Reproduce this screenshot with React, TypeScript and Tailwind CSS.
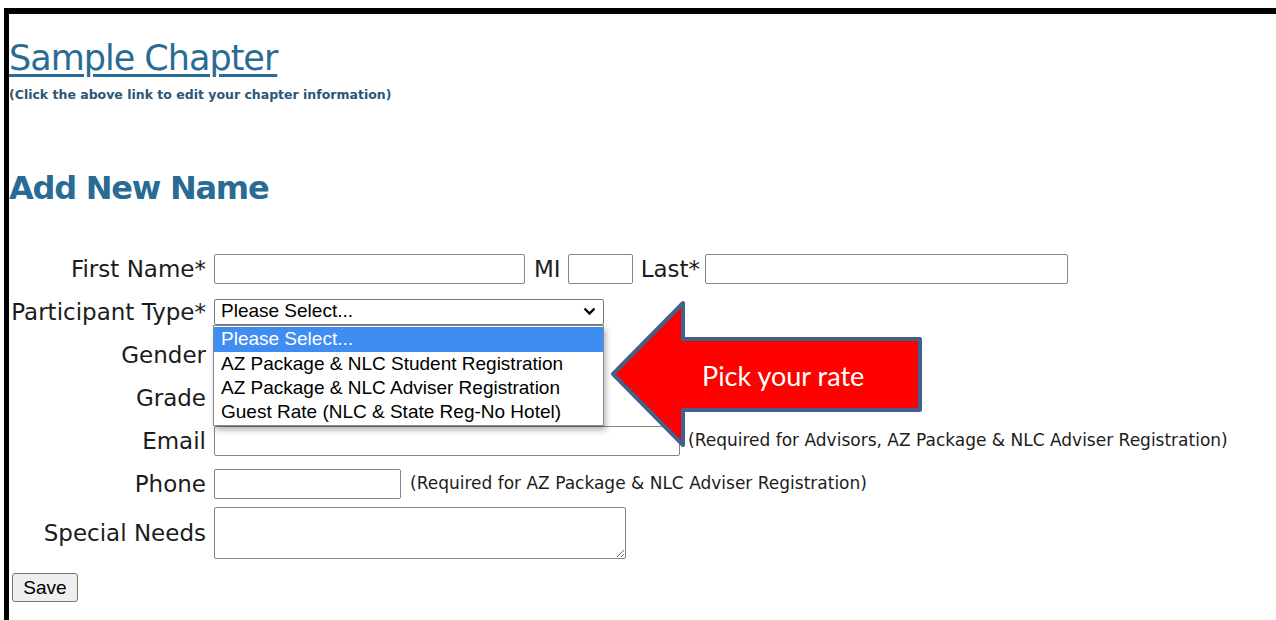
import React from "react";

const sans = "font-['DejaVu_Sans',Verdana,sans-serif]";
const arial = "font-['Liberation_Sans',Arial,sans-serif]";

function Label({ children }: { children: React.ReactNode }) {
  return (
    <div className={`w-[197px] shrink-0 text-right text-[23px] leading-[28px] text-[#1c1c1c] ${sans}`}>
      {children}
    </div>
  );
}

function Field({ w, h = 30 }: { w: number; h?: number }) {
  return (
    <input
      type="text"
      style={{ width: w, height: h }}
      className="rounded-[2px] border border-[#858585] bg-white outline-none"
    />
  );
}

const options = [
  "Please Select...",
  "AZ Package & NLC Student Registration",
  "AZ Package & NLC Adviser Registration",
  "Guest Rate (NLC & State Reg-No Hotel)",
];

export default function App() {
  return (
    <div className="relative h-[620px] w-[1276px] overflow-hidden bg-white pl-[4px] pt-[8px]">
      <div className="h-[640px] border-l-[5px] border-t-[6px] border-black">
        {/* chapter link */}
        <div className="pt-[24px]">
          <a
            href="#"
            className={`block text-[35px] leading-[40px] tracking-[-1px] text-[#2a6b96] underline decoration-[2.5px] underline-offset-[4px] ${sans}`}
          >
            Sample Chapter
          </a>
          <p className={`mt-[9px] text-[12.5px] font-bold leading-[16px] text-[#2b5677] ${sans}`}>
            (Click the above link to edit your chapter information)
          </p>
        </div>

        <h2 className={`mt-[65px] text-[32px] font-bold leading-[40px] tracking-[-1.25px] text-[#2a6b96] ${sans}`}>
          Add New Name
        </h2>

        {/* form */}
        <div className="mt-[40px] flex flex-col">
          <div className="flex h-[42px] items-center">
            <Label>First Name*</Label>
            <div className="ml-[8px] flex items-center">
              <Field w={311} />
              <span className={`ml-[9px] mr-[7px] text-[23px] text-[#1c1c1c] ${sans}`}>MI</span>
              <Field w={65} />
              <span className={`ml-[8px] mr-[5px] text-[23px] text-[#1c1c1c] ${sans}`}>Last*</span>
              <Field w={363} />
            </div>
          </div>

          <div className="flex h-[43px] items-center">
            <Label>Participant Type*</Label>
            <div
              className={`ml-[8px] flex h-[26px] w-[390px] items-center justify-between rounded-[2px] border border-[#767676] bg-white pl-[6px] pr-[7px] text-[19px] text-black ${arial}`}
            >
              <span>Please Select...</span>
              <svg width="13" height="9" viewBox="0 0 13 9">
                <path d="M1.5 1.5 L6.5 6.5 L11.5 1.5" fill="none" stroke="#000" strokeWidth="2.4" />
              </svg>
            </div>
          </div>

          <div className="flex h-[43px] items-center">
            <Label>Gender</Label>
            <div className="ml-[8px] h-[26px] w-[100px] rounded-[2px] border border-[#767676]" />
          </div>

          <div className="flex h-[43px] items-center">
            <Label>Grade</Label>
            <div className="ml-[8px] h-[26px] w-[100px] rounded-[2px] border border-[#767676]" />
          </div>

          <div className="flex h-[43px] items-center">
            <Label>Email</Label>
            <div className="ml-[8px] flex items-center">
              <Field w={466} h={30} />
              <span className={`ml-[8px] text-[17px] text-[#1c1c1c] ${sans}`}>
                (Required for Advisors, AZ Package &amp; NLC Adviser Registration)
              </span>
            </div>
          </div>

          <div className="flex h-[43px] items-center">
            <Label>Phone</Label>
            <div className="ml-[8px] flex items-center">
              <Field w={187} h={30} />
              <span className={`ml-[9px] text-[17px] text-[#1c1c1c] ${sans}`}>
                (Required for AZ Package &amp; NLC Adviser Registration)
              </span>
            </div>
          </div>

          <div className="flex h-[56px] items-center">
            <Label>Special Needs</Label>
            <textarea className="ml-[8px] h-[52px] w-[412px] resize rounded-[2px] border border-[#858585] bg-white outline-none" />
          </div>

          <div className="pl-[3px] pt-[12px]">
            <button
              className={`h-[29px] w-[66px] rounded-[3px] border border-[#767676] bg-[#efefef] text-[19px] text-black ${arial}`}
            >
              Save
            </button>
          </div>
        </div>
      </div>

      {/* open option list of the participant type select */}
      <div
        className={`absolute left-[213px] top-[325px] flex w-[391px] flex-col border border-[#8a8a8a] bg-white py-[1px] text-[19px] leading-[24px] text-black shadow-[2px_4px_6px_rgba(0,0,0,0.3)] ${arial}`}
      >
        {options.map((o, i) => (
          <div
            key={o}
            className={i === 0 ? "h-[25px] bg-[#3f8cf3] pl-[7px] text-white" : "h-[24px] pl-[7px]"}
          >
            {o}
          </div>
        ))}
      </div>

      {/* callout arrow */}
      <svg className="absolute left-[600px] top-[290px]" width="340" height="170" viewBox="0 0 340 170">
        <polygon
          points="13,84 83,13 83,49 320,49 320,120 83,120 83,155"
          fill="#ff0000"
          stroke="#41618c"
          strokeWidth="4"
          strokeLinejoin="round"
        />
      </svg>
      <div className="absolute left-[702px] top-[359px] font-['Lato',sans-serif] text-[27px] leading-[34px] text-white">
        Pick your rate
      </div>
    </div>
  );
}
